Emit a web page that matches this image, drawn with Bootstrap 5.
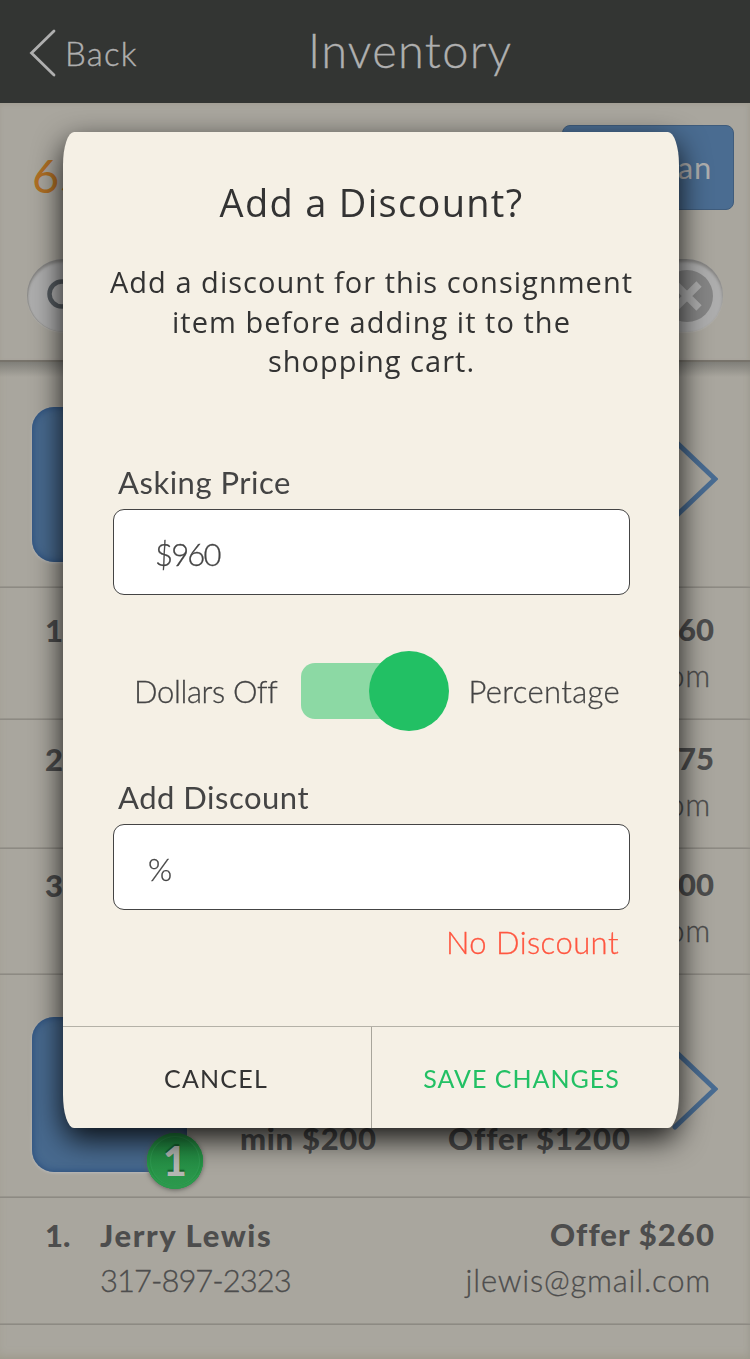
<!DOCTYPE html>
<html lang="en">
<head>
<meta charset="utf-8">
<meta name="viewport" content="width=device-width, initial-scale=1">
<title>Inventory</title>
<link href="https://cdn.jsdelivr.net/npm/bootstrap@5.3.0/dist/css/bootstrap.min.css" rel="stylesheet">
<style>
  body { width: 750px; height: 1359px; overflow: hidden; background: #a9a69e; color: #4d4d4d; font-family: Lato, "Liberation Sans", sans-serif; font-size: 31px; line-height: 45px; }
  .topbar { height: 103px; background: #333533; color: #afafaf; font-weight: 300; }
  .back-link { width: 250px; padding: 3px 0 0 29px; font-size: 33px; letter-spacing: 1.2px; color: #afafaf; font-weight: 300; -webkit-text-stroke: .4px; }
  .screen-title { font-size: 47px; letter-spacing: 1.3px; font-weight: 300; line-height: 100px; margin: 0 0 0 58px; -webkit-text-stroke: .3px; }
  .tools { height: 257px; padding: 22px 16px 0 32px; box-shadow: inset 0 2px 4px #a39f94, inset -5px 0 6px -5px #9b988f; }
  .count { font-size: 47px; color: #af6f24; padding-top: 25px; line-height: 50px; font-weight: 400; }
  .scan-btn { width: 172px; height: 85px; background: #4a6c91; border: 1px solid #3f5c7c; border-radius: 8px; color: #afafaf; font-size: 31px; padding: 0 21px 0 0; text-align: right; letter-spacing: .8px; line-height: 83px; }
  .search-pill { height: 73px; margin: 49px 11px 0 -5px; border-radius: 37px; background: #adadad; box-shadow: inset 0 3px 3px #848381, inset 1px 0 1px #969592, 0 1px 1px #b1afa9; padding: 0 10px 0 19px; }
  .list-area { height: 999px; box-shadow: inset -5px 0 6px -5px #9b988f, inset 0 -6px 8px -3px #9e9b8c; }
  .list-area::before { content: ""; display: block; height: 17px; margin-bottom: -17px; background: linear-gradient(#77736b 0 2px, #807f79 2px, rgba(150,147,140,0)); }
  .item-row { height: 227px; border-bottom: 1px solid #98958d; padding: 47px 32px 0 32px; box-shadow: 0 1px 0 #8d8a83; }
  .item-row.second { height: 223px; padding-top: 43px; }
  .thumb { width: 155px; height: 155px; border-radius: 22px; background: #486a8f; box-shadow: inset 0 0 7px 1px #2b4f7e, 0 1px 3px #bbb; }
  .thumb-badge { position: absolute; left: 115px; top: 116px; width: 56px; height: 56px; border-radius: 50%; background: linear-gradient(#208a40, #2c994d); box-shadow: 0 1px 5px #605f5b, inset 0 -3px 0 #2c994d, inset 0 0 0 3px #259144, inset 0 0 0 4px #2f9b51; color: #b5b7b3; font-size: 41px; font-weight: 900; line-height: 56px; text-shadow: 0 -2px 1px #17602d; }
  .offer-sum { padding-top: 99px; }
  .item-row .chevron { margin-top: 31px; }
  .sum-min { margin-left: 53px; width: 208px; letter-spacing: .7px; }
  .sum-top { letter-spacing: 1px; }
  .offer-row { border-bottom: 1px solid #98958d; box-shadow: 0 1px 0 #8d8a83; padding-right: 36px; padding-left: 45px; }
  .o-1 { height: 132px; padding-top: 20px; }
  .o-2 { height: 129px; padding-top: 17px; }
  .o-3 { height: 126px; padding-top: 14px; }
  .o-4 { height: 127px; padding-top: 15px; }
  .heavy { font-weight: 900; }
  .slim { font-weight: 300; -webkit-text-stroke: .3px; }
  .num, .person { padding-top: 1px; }
  .num { width: 55px; }
  .person .heavy { letter-spacing: 1.6px; }
  .person .slim { letter-spacing: -1px; }
  .bid .heavy { letter-spacing: 0; }
  .o-4 .bid .heavy { letter-spacing: 1.1px; margin-right: -1px; }
  .bid .slim { letter-spacing: .8px; padding: 1px 3px 0 0; }
  .modal { padding: 132px 71px 0 63px; overflow: hidden; }
  .modal-dialog { margin: 0; max-width: none; }
  .modal-content { height: 996px; border: 0; border-radius: 11px / 33px; background: #f5f0e5; box-shadow: 0 11px 30px 0 rgba(0,0,0,.88); color: #333; }
  .modal-body { padding: 42px 49px 0 50px; }
  .sheet-title { font: 400 38px/56px "Open Sans", sans-serif; letter-spacing: 1.3px; margin: 0; }
  .sheet-text { font: 400 29px/39.6px "Open Sans", sans-serif; letter-spacing: 1.03px; margin: 32px -20px 0; }
  .form-label { color: #444; font-size: 31px; line-height: 40px; letter-spacing: .5px; margin: 0 0 7px 5px; }
  .form-control { height: 86px; border: 1px solid #444; border-radius: 11px; background: #fff; color: #444; font-size: 31px; font-weight: 300; padding: 4px 41px 0; -webkit-text-stroke: .3px; }
  #price { letter-spacing: -1.8px; }
  #disc { padding-left: 34px; }
  .price-group { margin-top: 81px; }
  .toggle-line { height: 80px; margin-top: 56px; padding: 0 10px 0 21px; color: #444; }
  .toggle-line .slim { padding-top: 2px; }
  .t-left { width: 167px; letter-spacing: -.35px; }
  .t-right { letter-spacing: .35px; }
  .toggle-track { width: 148px; height: 56px; border-radius: 14px; background: linear-gradient(90deg, #8cd9a4 110px, transparent 110px); }
  .toggle-knob { width: 80px; height: 80px; border-radius: 50%; background: #22c064; }
  .discount-group { margin-top: 46px; }
  .no-discount { color: #ff5640; padding: 10px 11px 0; letter-spacing: .45px; }
  .modal-footer { height: 102px; padding: 0; border-top: 1px solid #b4b1a7; }
  .foot-btn { height: 101px; border: 0; border-radius: 0; font-size: 25px; letter-spacing: 1.2px; width: 308px; padding: 3px 2px 0 0; color: #333; }
  .foot-btn + .foot-btn { border-left: 1px solid #a8a59b; color: #22c064; letter-spacing: 1px; padding-right: 8px; }
</style>
</head>
<body>
<header class="topbar d-flex">
  <a class="back-link d-flex align-items-center text-decoration-none" href="#">
    <svg width="28" height="48" viewBox="0 0 28 48" fill="none" stroke="#afafaf" stroke-width="2.8" stroke-linecap="round"><path d="M25 2 2.500 24 25 46"/></svg>
    <span class="ps-2">Back</span>
  </a>
  <h1 class="screen-title">Inventory</h1>
</header>
<section class="tools">
  <div class="d-flex justify-content-between">
    <span class="count">65</span>
    <button class="btn scan-btn">Scan</button>
  </div>
  <div class="search-pill d-flex align-items-center justify-content-between">
    <svg width="34" height="34" viewBox="0 0 34 34" fill="none" stroke="#545a5f" stroke-width="4.500" class="mb-1"><circle cx="16" cy="17" r="12.500"/><path d="m25 26 8 8"/></svg>
    <svg width="52" height="52" viewBox="0 0 52 52"><circle cx="26" cy="26" r="26" fill="#858585"/><path d="m14 14 24 24M38 14 14 38" stroke="#adadad" stroke-width="7.500"/></svg>
  </div>
</section>
<main class="list-area">
  <div class="item-row d-flex justify-content-between">
    <div class="thumb"></div>
    <svg class="chevron" width="46" height="82" viewBox="0 0 46 82" fill="none" stroke="#496c92" stroke-width="5" stroke-linecap="round"><path d="M3 3 43 41 3 79"/></svg>
  </div>
  <div class="offer-row o-1 d-flex justify-content-between">
    <div class="num heavy">1</div>
    <div class="bid text-end"><div class="heavy">60</div><div class="slim">om</div></div>
  </div>
  <div class="offer-row o-2 d-flex justify-content-between">
    <div class="num heavy">2</div>
    <div class="bid text-end"><div class="heavy">75</div><div class="slim">om</div></div>
  </div>
  <div class="offer-row o-3 d-flex justify-content-between">
    <div class="num heavy">3</div>
    <div class="bid text-end"><div class="heavy">00</div><div class="slim">om</div></div>
  </div>
  <div class="item-row second d-flex">
    <div class="thumb position-relative"><span class="thumb-badge text-center">1</span></div>
    <div class="offer-sum heavy d-flex"><span class="sum-min">min $200</span><span class="sum-top">Offer $1200</span></div>
    <svg class="chevron ms-auto" width="46" height="82" viewBox="0 0 46 82" fill="none" stroke="#496c92" stroke-width="5" stroke-linecap="round"><path d="M3 3 43 41 3 79"/></svg>
  </div>
  <div class="offer-row o-4 d-flex">
    <div class="num heavy">1.</div>
    <div class="person"><div class="heavy">Jerry Lewis</div><div class="slim">317-897-2323</div></div>
    <div class="bid ms-auto text-end"><div class="heavy">Offer $260</div><div class="slim">jlewis@gmail.com</div></div>
  </div>
</main>

<div class="modal d-block" tabindex="-1">
  <div class="modal-dialog">
    <div class="modal-content">
      <div class="modal-body">
        <h2 class="sheet-title text-center">Add a Discount?</h2>
        <p class="sheet-text text-center">Add a discount for this consignment<br>item before adding it to the<br>shopping cart.</p>
        <div class="price-group">
          <label class="form-label d-block" for="price">Asking Price</label>
          <input class="form-control" id="price" value="$960">
        </div>
        <div class="toggle-line d-flex align-items-center">
          <span class="slim t-left">Dollars Off</span>
          <div class="toggle-track d-flex align-items-center justify-content-end"><div class="toggle-knob flex-shrink-0"></div></div>
          <span class="slim t-right ms-auto">Percentage</span>
        </div>
        <div class="discount-group">
          <label class="form-label d-block" for="disc">Add Discount</label>
          <input class="form-control" id="disc" value="%">
        </div>
        <div class="no-discount slim text-end">No Discount</div>
      </div>
      <div class="modal-footer d-flex flex-nowrap">
        <button class="btn foot-btn m-0">CANCEL</button>
        <button class="btn foot-btn m-0">SAVE CHANGES</button>
      </div>
    </div>
  </div>
</div>
<script src="https://cdn.jsdelivr.net/npm/bootstrap@5.3.0/dist/js/bootstrap.bundle.min.js"></script>
</body>
</html>
